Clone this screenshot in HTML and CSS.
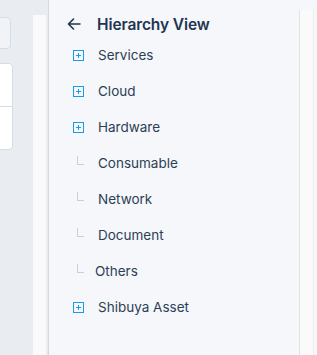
FILE: index.html
```html
<!DOCTYPE html>
<html>
<head>
<meta charset="utf-8">
<link rel="stylesheet" href="styles.css">
</head>
<body>
<div class="page">
  <div class="left">
    <div class="card-top"></div>
    <div class="card-list">
      <div class="card-row"></div>
      <div class="card-row"></div>
    </div>
  </div>
  <div class="strip-left"></div>
  <div class="panel">
    <div class="content">
      <div class="header">
        <svg class="back" width="14" height="12" viewBox="0 0 14 12"><path d="M13 6H1.5M6.5 1L1.5 6l5 5" fill="none" stroke="#1f3550" stroke-width="1.6" stroke-linecap="round" stroke-linejoin="round"/></svg>
        <span class="title">Hierarchy View</span>
      </div>
      <ul class="tree">
        <li class="item"><span class="ico"><span class="plus"></span></span><span class="label">Services</span></li>
        <li class="item"><span class="ico"><span class="plus"></span></span><span class="label">Cloud</span></li>
        <li class="item"><span class="ico"><span class="plus"></span></span><span class="label">Hardware</span></li>
        <li class="item"><span class="ico"><span class="elbow"></span></span><span class="label">Consumable</span></li>
        <li class="item"><span class="ico"><span class="elbow"></span></span><span class="label">Network</span></li>
        <li class="item"><span class="ico"><span class="elbow"></span></span><span class="label">Document</span></li>
        <li class="item"><span class="ico"><span class="elbow"></span></span><span class="label shift">Others</span></li>
        <li class="item"><span class="ico"><span class="plus"></span></span><span class="label">Shibuya Asset</span></li>
      </ul>
    </div>
    <div class="strip-right"></div>
  </div>
</div>
</body>
</html>
```
FILE: styles.css
```css
html, body {
  margin: 0;
  padding: 0;
  height: 100%;
}
body {
  font-family: Inter, "Noto Sans", sans-serif;
  background: #e9edf2;
  overflow: hidden;
}
.page {
  display: flex;
  height: 355px;
}
.left {
  width: 33px;
  overflow: hidden;
  flex: none;
  position: relative;
}
.card-top {
  margin-top: 17px;
  margin-left: -20px;
  width: 29px;
  height: 30px;
  background: #f1f3f6;
  border: 1px solid #d6dce4;
  border-radius: 4px;
}
.card-list {
  margin-top: 14px;
  margin-left: -20px;
  width: 31px;
  background: #ffffff;
  border: 1px solid #d6dce4;
  border-radius: 4px;
}
.card-row {
  height: 42px;
}
.card-row + .card-row {
  border-top: 1px solid #d6dce4;
}
.strip-left {
  width: 13px;
  margin-top: 15px;
  background: #fafafa;
  flex: none;
}
.panel {
  margin-left: 2px;
  flex: 1;
  display: flex;
  background: #f5f7fa;
  border-left: 1px solid #d1dae4;
}
.content {
  flex: 1;
  padding: 15px 0 0 18px;
}
.header {
  display: flex;
  align-items: center;
  height: 18px;
}
.back {
  display: block;
  margin-right: 16px;
}
.title {
  font-size: 15.5px;
  font-weight: 600;
  color: #1f3550;
  letter-spacing: -0.1px;
}
.tree {
  list-style: none;
  margin: 4px 0 0 0;
  padding: 0;
}
.item {
  display: flex;
  align-items: center;
  height: 36px;
  font-size: 13.5px;
  color: #2d3f55;
}
.ico {
  width: 31px;
  padding-left: 6px;
  box-sizing: border-box;
  display: flex;
  align-items: center;
  flex: none;
}
.plus {
  width: 9px;
  height: 9px;
  border: 1px solid #1a9be8;
  position: relative;
}
.plus::before, .plus::after {
  content: "";
  position: absolute;
  background: #1a9be8;
}
.plus::before {
  left: 2px;
  top: 4px;
  width: 5px;
  height: 1px;
}
.plus::after {
  left: 4px;
  top: 2px;
  width: 1px;
  height: 5px;
}
.elbow {
  margin-left: 4px;
  width: 6px;
  height: 8px;
  border-left: 1px solid #c9cfd7;
  border-bottom: 1px solid #c9cfd7;
  margin-top: -6px;
}
.shift {
  margin-left: -3px;
}
.strip-right {
  width: 13px;
  margin-top: 10px;
  margin-right: 3px;
  background: #fafafa;
  border-left: 1px solid #e2e2e2;
  border-right: 1px solid #ececec;
  flex: none;
}
```
